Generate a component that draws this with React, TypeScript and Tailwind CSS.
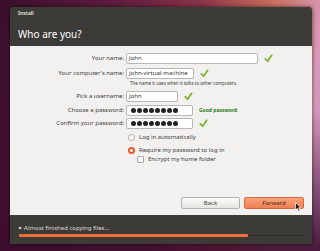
import React from 'react'

const Check: React.FC = () => (
  <svg width="9" height="9" viewBox="0 0 10 10" className="shrink-0">
    <path d="M1.5 5.5 L4 8 L8.5 1.5" fill="none" stroke="#7fb233" strokeWidth="2" strokeLinecap="round" strokeLinejoin="round" />
  </svg>
)

const Dots: React.FC = () => (
  <span className="flex gap-[1px] pl-[2px]">
    {[0, 1, 2, 3, 4, 5, 6, 7].map(i => (
      <span key={i} className="block h-[5px] w-[5px] rounded-full bg-[#222]" />
    ))}
  </span>
)

const Row: React.FC<{ label: string; children: React.ReactNode }> = ({ label, children }) => (
  <div className="flex items-center">
    <span className="w-[116px] whitespace-nowrap pr-[2px] text-right text-[6px] text-[#3c3c3c]">{label}</span>
    <div className="flex items-center gap-[6px]">{children}</div>
  </div>
)

const Input: React.FC<{ w: string; children?: React.ReactNode }> = ({ w, children }) => (
  <div className={`flex h-[11px] items-center overflow-hidden whitespace-nowrap rounded-[2px] border border-[#b9b7b3] bg-white px-[2px] text-[6px] text-[#333] ${w}`}>
    {children}
  </div>
)

export default function App() {
  return (
    <div
      className="relative h-[251px] w-[320px] overflow-hidden pl-[10px] pt-[7px]"
      style={{ fontFamily: '"Noto Sans", "DejaVu Sans", sans-serif' }}
    >
      <div className="absolute inset-0 bg-[linear-gradient(100deg,#3a0f2b_0%,#5c1a3c_30%,#8a3349_55%,#c96f5e_75%,#d99ab8_90%,#c68fc4_100%)]" />
      <div className="absolute inset-x-0 bottom-0 h-[140px] bg-[linear-gradient(180deg,rgba(0,0,0,0)_0%,rgba(60,12,45,0.9)_100%)]" />

      <div className="relative flex w-[302px] flex-col overflow-hidden rounded-t-[3px] shadow-[0_0_4px_rgba(0,0,0,0.6)]">
        <div className="flex h-[39px] flex-col bg-[#3c3b37] pl-[8px] pt-[2px]">
          <span className="text-[5px] font-bold leading-[8px] text-[#dfdbd2]">Install</span>
          <span className="mt-[11px] text-[10px] leading-[12px] text-white">Who are you?</span>
        </div>

        <div className="flex h-[169px] flex-col bg-[#f2f1f0] pt-[7px]">
          <div className="flex flex-col">
            <Row label="Your name:">
              <Input w="w-[132px]">John</Input>
              <Check />
            </Row>
            <div className="mt-[4px]">
              <Row label="Your computer's name:">
                <Input w="w-[68px]">john-virtual-machine</Input>
                <Check />
              </Row>
            </div>
            <div className="whitespace-nowrap pl-[120px] text-[4.5px] leading-[9px] text-[#3c3c3c]">
              The name it uses when it talks to other computers.
            </div>
            <div className="mt-[3px]">
              <Row label="Pick a username:">
                <Input w="w-[52px]">john</Input>
                <Check />
              </Row>
            </div>
            <div className="mt-[3px]">
              <Row label="Choose a password:">
                <Input w="w-[67px]">
                  <Dots />
                </Input>
                <span className="text-[5px] font-bold text-[#2d7a1a]">Good password</span>
              </Row>
            </div>
            <div className="mt-[2px]">
              <Row label="Confirm your password:">
                <Input w="w-[67px]">
                  <Dots />
                </Input>
                <Check />
              </Row>
            </div>
            <div className="mt-[3px] flex flex-col gap-[2px] pl-[118px] text-[6px] text-[#3c3c3c]">
              <div className="flex h-[11px] items-center gap-[4px]">
                <span className="h-[7px] w-[7px] rounded-full border border-[#a9a7a3] bg-white" />
                <span>Log in automatically</span>
              </div>
              <div className="flex h-[10px] items-center gap-[4px]">
                <span className="flex h-[7px] w-[7px] items-center justify-center rounded-full bg-[#e9592a]">
                  <span className="h-[3px] w-[3px] rounded-full bg-white" />
                </span>
                <span>Require my password to log in</span>
              </div>
              <div className="-mt-[3px] flex h-[10px] items-center gap-[4px] pl-[9px]">
                <span className="h-[7px] w-[7px] rounded-[1px] border border-[#a9a7a3] bg-white" />
                <span>Encrypt my home folder</span>
              </div>
            </div>
          </div>

          <div className="mt-auto mb-[6px] flex justify-end gap-[4px] pr-[8px]">
            <div className="flex h-[12px] w-[59px] items-center justify-center rounded-[2px] border border-[#b3b1ad] bg-[linear-gradient(180deg,#fbfbfa,#e6e4e1)] text-[6px] text-[#3c3c3c]">
              Back
            </div>
            <div className="flex h-[12px] w-[60px] items-center justify-center rounded-[2px] border border-[#d8683f] bg-[linear-gradient(180deg,#f9a27b,#f07f50)] text-[6px] text-[#3c2a22]">
              Forward
            </div>
          </div>
        </div>

        <div className="flex h-[29px] flex-col bg-[#3c3b37] px-[9px] pt-[9px]">
          <div className="flex items-center gap-[2px] text-[6px] leading-[8px] text-[#dfdbd2]">
            <span className="text-[4px]">▶</span>
            <span>Almost finished copying files...</span>
          </div>
          <div className="mt-[1px] flex h-[4px] items-center">
            <div className="h-[3px] w-[229px] rounded-[1px] bg-[#f0703a]" />
            <div className="h-[1px] flex-1 bg-[#2e2d2a]" />
          </div>
        </div>
      </div>

      <svg className="absolute left-[295px] top-[202px]" width="7" height="10" viewBox="0 0 7 10">
        <path d="M0.5 0.5 L0.5 8 L2.3 6.3 L3.6 9.3 L4.9 8.7 L3.6 5.8 L6 5.8 Z" fill="#1a1a1a" stroke="#fff" strokeWidth="0.7" />
      </svg>
    </div>
  )
}
